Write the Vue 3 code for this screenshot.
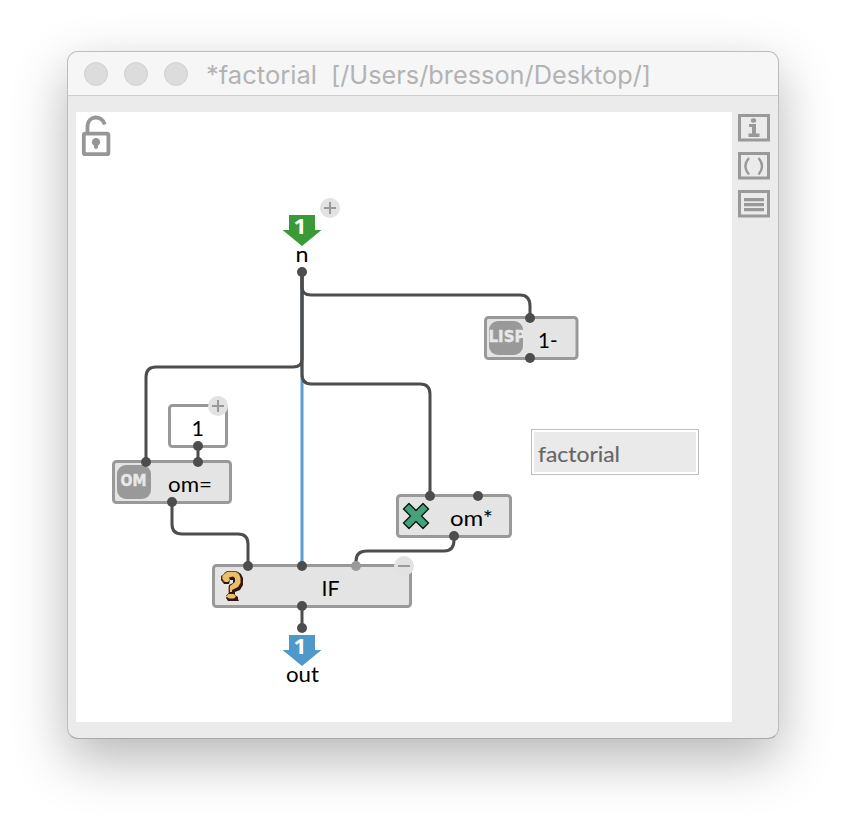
<script setup>
const wires = [
  { d: 'M302 272V566', color: '#5a9fce' },
  { d: 'M302 272V287Q302 295 311 295H520Q530 295 530 306V318' },
  { d: 'M302 272V359Q302 367 293 367H156Q146 367 146 377V462' },
  { d: 'M302 272V374Q302 384 311 384H420Q430 384 430 394V496' },
  { d: 'M198 446V462' },
  { d: 'M172 502V524Q172 534 182 534H238Q248 534 248 544V566' },
  { d: 'M454 536V540Q454 551 444 551H367Q356 551 356 561V566' },
  { d: 'M302 606V628' },
]

const boxes = [
  { x: 485.5, y: 317.5, w: 91.5, h: 41, label: '1-', tx: 538, ty: 348, tw: 19.5 },
  { x: 169.5, y: 405.5, w: 57, h: 41, label: '1', tx: 191.5, ty: 436, tw: 12.5, fill: '#fff' },
  { x: 113.5, y: 461.5, w: 117, h: 41, label: 'om=', tx: 168, ty: 492, tw: 44 },
  { x: 397.5, y: 495.5, w: 113, h: 41, label: 'om*', tx: 450, ty: 526, tw: 43 },
  { x: 213.5, y: 565.5, w: 197, h: 41, label: 'IF', tx: 321.5, ty: 596, tw: 18 },
]

const ports = [
  [302, 272], [530, 318], [530, 358], [198, 446], [146, 462], [198, 462], [172, 502],
  [430, 496], [478, 496], [454, 536], [248, 566], [302, 566], [302, 606], [302, 628],
]

const terminals = [
  { y: 215, color: '#389b38', label: 'n', tx: 295.5, ty: 262, tw: 13 },
  { y: 635, color: '#4f99ca', label: 'out', tx: 286, ty: 682, tw: 33 },
]

const toggles = [
  { x: 330, y: 208, plus: true },
  { x: 218, y: 406, plus: true },
  { x: 404, y: 566, plus: false },
]
</script>

<template>
  <main class="desktop">
    <section class="window">
      <header class="titlebar">
        <i v-for="n in 3" :key="n" class="light"></i>
        <svg class="title" width="450" height="43" viewBox="205 52 450 43">
          <text x="206" y="83.500" textLength="111" lengthAdjust="spacingAndGlyphs">*factorial</text>
          <text x="331" y="83.500" textLength="320" lengthAdjust="spacingAndGlyphs">[/Users/bresson/Desktop/]</text>
        </svg>
      </header>
      <div class="content">
        <svg class="patch" width="656" height="610" viewBox="76 112 656 610">
          <g fill="none" stroke="#969696">
            <path d="M87.5 134V127C87.5 114.500 102.500 115 104.700 124.500" stroke-width="3.8" />
            <rect x="83.8" y="133.6" width="24.6" height="20.6" rx="1.5" stroke-width="3.8" />
          </g>
          <path d="M96 138a4 4 0 0 1 2 7.5V147q0 2-2 2t-2-2V145.5A4 4 0 0 1 96 138Z" fill="#969696" />

          <g v-for="t in terminals" :key="t.label">
            <path :d="`M289 ${t.y}h26v15h6.500l-19.500 16l-19.500-16h6.500z`" :fill="t.color" />
            <text class="badge" x="293.500" :y="t.y + 19" textLength="13" lengthAdjust="spacingAndGlyphs">1</text>
            <text class="label" :x="t.tx" :y="t.ty" :textLength="t.tw" lengthAdjust="spacingAndGlyphs">{{ t.label }}</text>
          </g>

          <g v-for="b in boxes" :key="b.label">
            <rect :x="b.x" :y="b.y" :width="b.w" :height="b.h" rx="3" :fill="b.fill || '#e4e4e4'" stroke="#999" stroke-width="3" />
            <text class="label" :x="b.tx" :y="b.ty" :textLength="b.tw" lengthAdjust="spacingAndGlyphs">{{ b.label }}</text>
          </g>

          <clipPath id="lisp-clip"><rect x="489" y="321" width="34" height="34" rx="9" /></clipPath>
          <rect x="489" y="321" width="34" height="34" rx="9" fill="#999" />
          <g clip-path="url(#lisp-clip)">
            <text class="tag" x="488.500" y="342" textLength="37" lengthAdjust="spacingAndGlyphs">LISP</text>
          </g>
          <rect x="117" y="465" width="34" height="34" rx="9" fill="#999" />
          <text class="tag" x="120.500" y="486" textLength="26" lengthAdjust="spacingAndGlyphs">OM</text>

          <path d="M409 503.500L416 510.500L423 503.500L428.500 509L421.500 516L428.500 523L423 528.500L416 521.500L409 528.500L403.500 523L410.500 516L403.500 509Z" fill="#45a17a" stroke="#101814" stroke-width="1.400" stroke-linejoin="round" />

          <g>
            <path d="M227 572H238L241 574L243 578V585L240 590L235 592V595L238 597V599L239 601H228L226 598L229 592V585L233 583V580H230L229 584H224L221 580V576Z" fill="#34160f" />
            <path d="M227 572H236L239 574L240.500 578V583L238 587L232 590V592H230V586L235 582V578L233 576.500L229 577.500L230 580L228 582H224L222 579V576Z" fill="#e9bf6c" />
            <path d="M228 594H234L236 596.500L234 598.500H229L226.500 596.500Z" fill="#e9bf6c" />
            <path d="M224 573.500L227 571.500H236L239 573M222 576V579L224.500 582M229 586V592M226 596L228 594" fill="none" stroke="#6d4623" stroke-width="1" />
          </g>

          <path v-for="w in wires" :key="w.d" :d="w.d" fill="none" :stroke="w.color || '#4d4d4d'" stroke-width="3" />
          <circle v-for="p in ports" :key="p.join()" :cx="p[0]" :cy="p[1]" r="5" fill="#4d4d4d" />
          <circle cx="356" cy="566" r="5" fill="#999" />

          <g v-for="g in toggles" :key="g.x">
            <circle :cx="g.x" :cy="g.y" r="10" fill="#e2e2e2" />
            <path :d="`M${g.x - 6} ${g.y}h12` + (g.plus ? `M${g.x} ${g.y - 6}v12` : '')" stroke="#999" stroke-width="2" />
          </g>

          <rect x="531.500" y="429.500" width="167" height="45" fill="#fff" stroke="#bdbdbd" />
          <rect x="534" y="432" width="162" height="40" fill="#eaeaea" />
          <text class="comment" x="538" y="462" textLength="82" lengthAdjust="spacingAndGlyphs">factorial</text>
        </svg>
        <nav class="tools">
          <svg width="32" height="28" viewBox="0 0 32 28">
            <rect class="frame" x="1.500" y="1.500" width="29" height="24.500" />
            <ellipse cx="15.500" cy="6.500" rx="2.700" ry="2.200" fill="#999" />
            <path d="M11 10H18V19.500H21.500V23H10.500V19.500H14V13H11Z" fill="#999" />
          </svg>
          <svg width="32" height="28" viewBox="0 0 32 28">
            <rect class="frame" x="1.500" y="1.500" width="29" height="24.500" />
            <path d="M11 6Q3.800 14 11 22.500M20.500 6Q27.500 14 20.500 22.500" fill="none" stroke="#999" stroke-width="2.300" />
          </svg>
          <svg width="32" height="28" viewBox="0 0 32 28">
            <rect class="frame" x="1.500" y="1.500" width="29" height="24.500" />
            <path d="M6 9.700H26M6 14.700H26M6 19.700H26" stroke="#999" stroke-width="3.200" />
          </svg>
        </nav>
      </div>
    </section>
  </main>
</template>

<style>
body {
  background: #fff;
}
</style>

<style scoped>
.desktop {
  box-sizing: border-box;
  width: 846px;
  height: 822px;
  padding: 51px 67px 83px;
  overflow: hidden;
}
.window {
  box-sizing: border-box;
  width: 712px;
  height: 688px;
  border: 1px solid #bcbcbc;
  border-bottom-color: #a8a8a8;
  border-radius: 11px;
  background: #ebebeb;
  box-shadow: 0 20px 54px rgba(0, 0, 0, 0.29);
}
.titlebar {
  box-sizing: border-box;
  display: flex;
  align-items: center;
  height: 44px;
  padding-left: 16px;
  gap: 16px;
  border-bottom: 1px solid #cdcdcd;
  border-radius: 10px 10px 0 0;
  background: #f6f6f6;
}
.light {
  box-sizing: border-box;
  width: 24px;
  height: 24px;
  border: 1px solid #cfcfcf;
  border-radius: 50%;
  background: #dcdcdc;
}
.title {
  display: block;
  margin-left: 1px;
  font: 25px Inter, sans-serif;
  fill: #b3b3b3;
}
.content {
  display: flex;
  gap: 6px;
  padding: 16px 8px;
}
.patch {
  display: block;
  background: #fff;
}
.label {
  font: 22px Lato, "Noto Sans", sans-serif;
  fill: #000;
}
.comment {
  font: 22px Lato, "Noto Sans", sans-serif;
  fill: #666;
  stroke: #666;
  stroke-width: 0.15px;
}
.badge {
  font: bold 22px "Noto Sans", sans-serif;
  fill: #fff;
}
.tag {
  font: bold 15px "DejaVu Sans", sans-serif;
  fill: #e8e8e8;
  stroke: #e8e8e8;
  stroke-width: 0.4px;
}
.tools {
  display: flex;
  flex-direction: column;
  gap: 10px;
  padding-top: 2px;
}
.tools svg {
  display: block;
}
.frame {
  fill: none;
  stroke: #999;
  stroke-width: 3;
}
</style>
